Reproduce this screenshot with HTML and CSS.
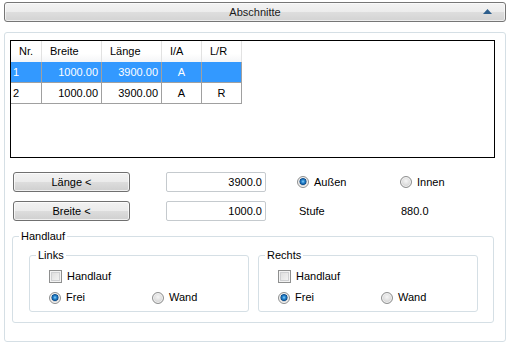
FILE: index.html
```html
<!DOCTYPE html>
<html lang="de">
<head>
    <meta charset="UTF-8">
    <title>Abschnitte</title>
    <link rel="stylesheet" href="styles.css">
</head>
<body>

<div class="header">
    <span></span>
    <span class="title">Abschnitte</span>
    <svg class="arrow" width="9" height="5" viewBox="0 0 9 5"><path d="M0 5 L4.5 0 L9 5 Z" fill="#2d5e8c"/></svg>
</div>

<div class="panel">
    <div class="list">
        <table>
            <colgroup>
                <col class="c-nr"><col class="c-num"><col class="c-num"><col class="c-flag"><col class="c-flag">
            </colgroup>
            <thead>
                <tr><th>Nr.</th><th>Breite</th><th>Länge</th><th>I/A</th><th>L/R</th></tr>
            </thead>
            <tbody>
                <tr class="selected"><td>1</td><td class="num">1000.00</td><td class="num">3900.00</td><td class="mid">A</td><td class="mid"></td></tr>
                <tr><td>2</td><td class="num">1000.00</td><td class="num">3900.00</td><td class="mid">A</td><td class="mid">R</td></tr>
            </tbody>
        </table>
    </div>

    <div class="controls">
        <button class="btn">Länge &lt;</button>
        <input type="text" class="field" value="3900.0">
        <label class="opt"><input type="radio" name="side" checked>Außen</label>
        <label class="opt"><input type="radio" name="side">Innen</label>

        <button class="btn">Breite &lt;</button>
        <input type="text" class="field" value="1000.0">
        <span class="stufe">Stufe</span>
        <span class="stufe-val">880.0</span>
    </div>

    <fieldset class="group outer">
        <legend>Handlauf</legend>
        <div class="sides">
            <fieldset class="group side">
                <legend>Links</legend>
                <div class="side-body">
                    <label class="opt"><input type="checkbox">Handlauf</label>
                    <div class="pair">
                        <label class="opt"><input type="radio" name="links" checked>Frei</label>
                        <label class="opt"><input type="radio" name="links">Wand</label>
                    </div>
                </div>
            </fieldset>
            <fieldset class="group side">
                <legend>Rechts</legend>
                <div class="side-body">
                    <label class="opt"><input type="checkbox">Handlauf</label>
                    <div class="pair">
                        <label class="opt"><input type="radio" name="rechts" checked>Frei</label>
                        <label class="opt"><input type="radio" name="rechts">Wand</label>
                    </div>
                </div>
            </fieldset>
        </div>
    </fieldset>
</div>

</body>
</html>
```

FILE: styles.css
```css
body {
    font-family: 'Liberation Sans', Arial, sans-serif;
    font-size: 11px;
    line-height: 13px;
    color: #000;
    background-color: #fff;
    margin: 0;
    padding: 0;
}

.header {
    display: grid;
    grid-template-columns: 1fr auto 1fr;
    align-items: center;
    height: 20px;
    margin: 2px 7px 0 4px;
    border: 1px solid #767676;
    border-radius: 3px;
    box-sizing: border-box;
    background: linear-gradient(#f3f3f3 0%, #ececec 50%, #dedede 50%, #d3d3d3 100%);
    box-shadow: inset 0 0 0 1px rgba(255, 255, 255, 0.6);
}

.header .title {
    color: #1a1a1a;
}

.header .arrow {
    justify-self: end;
    margin-right: 13px;
    margin-top: -2px;
}

.panel {
    height: 310px;
    margin: 10px 7px 0 4px;
    border: 1px solid #d5dfe5;
    border-radius: 3px;
    box-sizing: border-box;
}

.list {
    height: 118px;
    margin: 7px 10px 0 5px;
    border: 1px solid #000;
    box-sizing: border-box;
    background: #fff;
}

table {
    border-collapse: separate;
    border-spacing: 0;
    table-layout: fixed;
    width: 231px;
    font-size: 11px;
}

.c-nr { width: 31px; }
.c-num { width: 60px; }
.c-flag { width: 40px; }

th {
    height: 21px;
    padding: 0 0 0 8px;
    font-weight: normal;
    text-align: left;
    border-right: 1px solid #e2e2e2;
    background: linear-gradient(#ffffff 0%, #ffffff 60%, #f4f5f7 100%);
    box-sizing: border-box;
}

td {
    height: 21px;
    padding: 0 2px;
    border-right: 1px solid #a0a0a0;
    border-bottom: 1px solid #a0a0a0;
    box-sizing: border-box;
    white-space: nowrap;
}

td.num {
    text-align: right;
    padding-right: 3px;
}

td.mid {
    text-align: center;
}

tr.selected td {
    background-color: #3399ff;
    color: #fff;
}

.controls {
    display: grid;
    grid-template-columns: 153px 131px 103px 1fr;
    grid-auto-rows: 20px;
    row-gap: 9px;
    align-items: center;
    margin-top: 14px;
    padding-left: 8px;
}

.btn {
    width: 117px;
    height: 20px;
    padding: 0;
    font-family: inherit;
    font-size: 11px;
    color: #000;
    border: 1px solid #707070;
    border-radius: 3px;
    background: linear-gradient(#f2f2f2 0%, #ebebeb 50%, #dddddd 50%, #cfcfcf 100%);
    box-shadow: inset 0 0 0 1px rgba(255, 255, 255, 0.7);
}

.field {
    width: 100px;
    height: 20px;
    padding: 0 3px;
    margin: 0;
    font-family: inherit;
    font-size: 11px;
    text-align: right;
    border: 1px solid #c5cace;
    border-radius: 2px;
    box-sizing: border-box;
    outline: none;
}

.opt {
    display: flex;
    align-items: center;
    gap: 5px;
    height: 13px;
}

input[type="radio"] {
    appearance: none;
    width: 12px;
    height: 12px;
    margin: 0;
    border: 1px solid #8e8f8f;
    border-radius: 50%;
    background: radial-gradient(circle at 50% 40%, #f6f6f6 0, #e3e3e3 3px, #cfcfcf 6px);
    box-shadow: inset 0 0 0 1px #f4f4f4;
}

input[type="radio"]:checked {
    background: radial-gradient(circle at 50% 45%, #8fd2f7 0, #2a8ad4 1.5px, #0d4f8f 3.2px, #c8c8c8 3.8px, #ececec 5px);
}

input[type="checkbox"] {
    appearance: none;
    width: 13px;
    height: 13px;
    margin: 0;
    border: 1px solid #8e8f8f;
    background: linear-gradient(135deg, #d9d9d9, #f8f8f8);
    box-shadow: inset 0 0 0 1px #f3f3f3, inset 0 0 0 2px #cfd0d2;
}

.stufe {
    padding-left: 2px;
}

.stufe-val {
    padding-left: 1px;
}

.group {
    margin: 0;
    padding: 0;
    border: 1px solid #d5dfe5;
    border-radius: 3px;
    min-width: 0;
}

.group legend {
    margin-left: 6px;
    padding: 0 2px;
    line-height: 13px;
}

.outer {
    margin: 9px 11px 0 7px;
}

.sides {
    display: grid;
    grid-template-columns: 1fr 1fr;
    column-gap: 9px;
    padding: 6px 15px 10px 16px;
}

.side-body {
    display: flex;
    flex-direction: column;
    gap: 8px;
    padding: 8px 0 7px 19px;
}

.pair {
    display: grid;
    grid-template-columns: 103px 1fr;
}
```
